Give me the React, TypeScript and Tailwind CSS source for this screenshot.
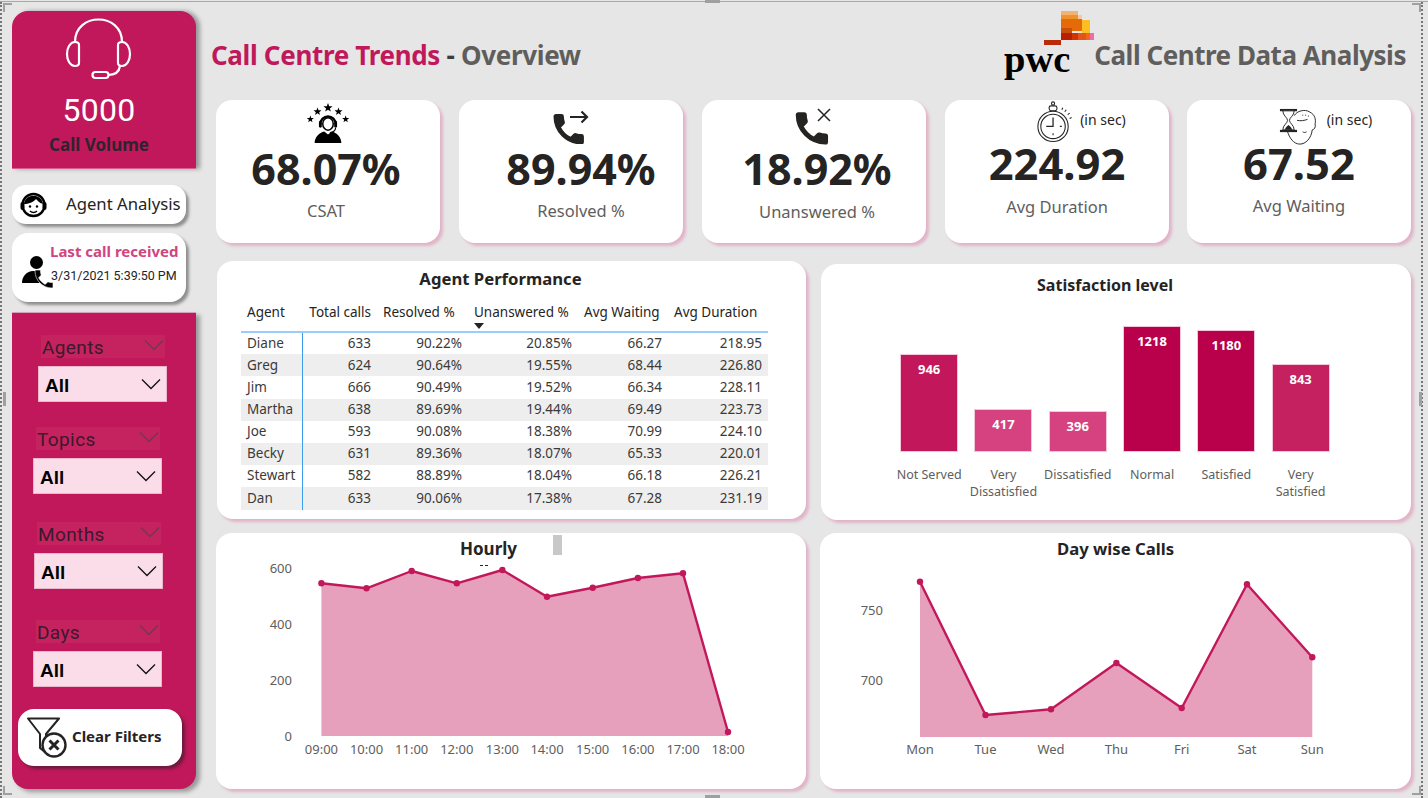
import React from "react";

const SEGOE = "font-['Noto_Sans',sans-serif]";

const agents = [
  ["Diane", "633", "90.22%", "20.85%", "66.27", "218.95"],
  ["Greg", "624", "90.64%", "19.55%", "68.44", "226.80"],
  ["Jim", "666", "90.49%", "19.52%", "66.34", "228.11"],
  ["Martha", "638", "89.69%", "19.44%", "69.49", "223.73"],
  ["Joe", "593", "90.08%", "18.38%", "70.99", "224.10"],
  ["Becky", "631", "89.36%", "18.07%", "65.33", "220.01"],
  ["Stewart", "582", "88.89%", "18.04%", "66.18", "226.21"],
  ["Dan", "633", "90.06%", "17.38%", "67.28", "231.19"],
];

const satisfaction = [
  { label: ["Not Served"], value: 946, h: 98, color: "bg-[#c2185b]" },
  { label: ["Very", "Dissatisfied"], value: 417, h: 43, color: "bg-[#d5427f]" },
  { label: ["Dissatisfied"], value: 396, h: 41, color: "bg-[#d5427f]" },
  { label: ["Normal"], value: 1218, h: 126, color: "bg-[#b9004b]" },
  { label: ["Satisfied"], value: 1180, h: 122, color: "bg-[#b9004b]" },
  { label: ["Very", "Satisfied"], value: 843, h: 88, color: "bg-[#c52060]" },
];

const slicers = [
  { name: "Agents", wrap: "ml-[29px] mt-[22px]" },
  { name: "Topics", wrap: "ml-[24px] mt-[25px]" },
  { name: "Months", wrap: "ml-[25px] mt-[28px]" },
  { name: "Days", wrap: "ml-[24px] mt-[31px]" },
];

const hourly = [
  ["09:00", 321.4, 583.3],
  ["10:00", 366.5, 588.3],
  ["11:00", 411.7, 571],
  ["12:00", 456.8, 583.3],
  ["13:00", 502.4, 570],
  ["14:00", 547, 596.7],
  ["15:00", 592.7, 587.7],
  ["16:00", 637.9, 578],
  ["17:00", 683, 573.3],
  ["18:00", 728, 732],
] as [string, number, number][];

const daily = [
  ["Mon", 920, 581.7],
  ["Tue", 985.5, 715],
  ["Wed", 1051, 709.3],
  ["Thu", 1116.4, 663],
  ["Fri", 1181.7, 708],
  ["Sat", 1247, 584.3],
  ["Sun", 1312.3, 657.3],
] as [string, number, number][];

const PHONE =
  "M6.62 10.79c1.44 2.83 3.76 5.14 6.59 6.59l2.2-2.2c.27-.27.67-.36 1.02-.24 1.12.37 2.33.57 3.57.57.55 0 1 .45 1 1V20c0 .55-.45 1-1 1-9.39 0-17-7.61-17-17 0-.55.45-1 1-1h3.5c.55 0 1 .45 1 1 0 1.25.2 2.45.57 3.57.11.35.03.74-.25 1.02l-2.2 2.2z";

function Star({ x, y, r }: { x: number; y: number; r: number }) {
  const pts = Array.from({ length: 10 }, (_, i) => {
    const a = -Math.PI / 2 + (i * Math.PI) / 5;
    const d = i % 2 ? r * 0.42 : r;
    return `${x + d * Math.cos(a)},${y + d * Math.sin(a)}`;
  }).join(" ");
  return <polygon points={pts} fill="#000" />;
}

function CsatIcon() {
  return (
    <svg width="42" height="41" viewBox="0 0 44 43">
      <Star x={22} y={5} r={5} />
      <Star x={11} y={9} r={4.4} />
      <Star x={33} y={9} r={4.4} />
      <Star x={3.5} y={17} r={3.8} />
      <Star x={40.5} y={17} r={3.8} />
      <path d="M14 22a8 8 0 0 1 16 0" fill="none" stroke="#000" strokeWidth="2.4" />
      <ellipse cx="22" cy="22" rx="5.5" ry="6.5" fill="#fff" stroke="#000" strokeWidth="1.6" />
      <rect x="12.5" y="19" width="3" height="7" rx="1.5" fill="#000" />
      <rect x="28.5" y="19" width="3" height="7" rx="1.5" fill="#000" />
      <path d="M8 42c0-6 5-11 10-12l4 3 4-3c5 1 10 6 10 12z" fill="#000" />
      <path d="M30 26c0 3-3 5-6 5" fill="none" stroke="#000" strokeWidth="1.2" />
    </svg>
  );
}

function PhoneArrow() {
  return (
    <svg width="38" height="36" viewBox="0 0 38 36">
      <g transform="translate(-2.5 2) scale(1.6)">
        <path d={PHONE} fill="#252423" stroke="#252423" strokeWidth="1" strokeLinejoin="round" />
      </g>
      <path d="M18 9h17M29.5 3.5L35 9l-5.5 5.5" fill="none" stroke="#252423" strokeWidth="2.2" />
    </svg>
  );
}

function PhoneCross() {
  return (
    <svg width="38" height="38" viewBox="0 0 38 38">
      <g transform="translate(-3.5 0) scale(1.7)">
        <path d={PHONE} fill="#252423" stroke="#252423" strokeWidth="1" strokeLinejoin="round" />
      </g>
      <path d="M23 1l12 12M35 1L23 13" fill="none" stroke="#252423" strokeWidth="1.5" />
    </svg>
  );
}

function Stopwatch() {
  return (
    <svg width="36" height="43" viewBox="0 0 36 44" fill="none" stroke="#252423">
      <circle cx="16" cy="27" r="15.5" strokeWidth="1.1" />
      <circle cx="16" cy="27" r="12.5" strokeWidth="1.1" />
      <path d="M16 18v9h-7" strokeWidth="1.3" />
      <path d="M16 36v-2M25 27h-2" strokeWidth="1.1" />
      <rect x="12" y="6" width="8" height="5" rx="2" strokeWidth="1.1" />
      <circle cx="16" cy="3.5" r="1.6" strokeWidth="1.1" />
      <path d="M25 10l1-2M28 12l1.5-2M31 15l2-1.5M33 19l2-1" strokeWidth="1.1" />
    </svg>
  );
}

function HourglassHead() {
  return (
    <svg width="40" height="38" viewBox="0 0 40 40" fill="none" stroke="#252423">
      <path d="M16 8c3-5 11-7 16-4 6 3 7 8 6 13 1 3-1 6-3 6-1 9-7 15-13 15-7 0-11-7-13-13" strokeWidth="1" fill="#fff" />
      <path d="M19 13c4 1 8 0 11-1M25 7v1M28 7v1M31 8v1" strokeWidth="1" />
      <path d="M25 25c1 1 3 1 4 0" strokeWidth="1" />
      <rect x="1" y="1" width="18" height="2.4" fill="#252423" stroke="none" />
      <rect x="1" y="23" width="18" height="2.4" fill="#252423" stroke="none" />
      <path d="M4 3c0 5 5 7 5 10s-5 5-5 10h12c0-5-5-7-5-10s5-5 5-10z" strokeWidth="1" fill="#fff" />
      <path d="M6 23c1-3 3-4 4-5 1 1 3 2 4 5z" fill="#252423" stroke="none" />
    </svg>
  );
}

function PwcLogo() {
  return (
    <svg width="100" height="76" viewBox="1000 8 100 76">
      <rect x="1061" y="11" width="17" height="4" fill="#f5b26e" />
      <rect x="1061" y="15" width="17" height="4" fill="#ee9230" />
      <rect x="1078" y="15" width="4" height="4" fill="#f8c9a0" />
      <rect x="1061" y="19" width="21" height="12" fill="#e56a08" />
      <rect x="1082" y="20" width="8" height="13" fill="#fbbf24" />
      <rect x="1061" y="28" width="11" height="5" fill="#c9500c" />
      <rect x="1061" y="33" width="11" height="7" fill="#b71f00" />
      <rect x="1072" y="33" width="6" height="7" fill="#d23400" />
      <rect x="1078" y="33" width="8" height="7" fill="#e4531a" />
      <rect x="1086" y="33" width="4" height="7" fill="#e96a1c" />
      <rect x="1090" y="33" width="4" height="7" fill="#f06ca8" />
      <rect x="1044" y="40" width="17" height="5" fill="#b92b08" />
      <text x="1004" y="72" fontFamily="'Liberation Serif',serif" fontWeight="700" fontSize="38.5" fill="#000">
        pwc
      </text>
    </svg>
  );
}

function Chevron({ className }: { className: string }) {
  return (
    <svg className={className} width="20" height="12" viewBox="0 0 20 12" fill="none" stroke="currentColor" strokeWidth="1.3">
      <path d="M1 1.5l9 9 9-9" />
    </svg>
  );
}

function Slicer({ name, wrap }: { name: string; wrap: string }) {
  return (
    <div className={wrap}>
      <div className="flex h-[23px] w-[124px] items-center justify-between bg-[#c5235f] pl-[1px] pr-[1px]">
        <span className="mt-[2px] font-['Roboto',sans-serif] text-[19px] leading-none tracking-[0.4px] text-[#3a1a2c]">{name}</span>
        <Chevron className="mb-[4px] text-[#6d3a50]" />
      </div>
      <div className="-ml-[3px] mt-[8px] flex h-[36px] w-[129px] items-center justify-between border border-[#e9b6cb] bg-[#fbdde9] pl-[6px] pr-[5px]">
        <span className="mt-[3px] font-['Liberation_Sans',sans-serif] text-[19px] font-bold leading-none text-black">All</span>
        <Chevron className="text-[#111]" />
      </div>
    </div>
  );
}

function Kpi({
  icon,
  value,
  label,
  big,
  shift,
  labelClass,
  note,
  iconRow,
}: {
  icon: React.ReactNode;
  value: string;
  label: string;
  big: boolean;
  shift: string;
  labelClass: string;
  note?: string;
  iconRow: string;
}) {
  return (
    <div className="flex h-[143px] w-[224px] flex-col items-center rounded-[16px] bg-white shadow-[3px_3px_3px_#e1b4c8]">
      <div className={`flex items-start ${iconRow}`}>
        {icon}
        {note && <span className={`${note} whitespace-nowrap text-[14px] leading-[18px] text-[#252423]`}>(in sec)</span>}
      </div>
      <div className={`${shift} text-center font-bold leading-none text-[#252423] ${big ? "text-[43px]" : "text-[43.5px]"}`}>{value}</div>
      <div className={`${shift} ${labelClass} text-[16.5px] leading-none text-[#605e5c]`}>{label}</div>
    </div>
  );
}

function AreaChart({
  points,
  viewBox,
  base,
  ticks,
  tickX,
  width,
  height,
}: {
  points: [string, number, number][];
  viewBox: string;
  base: number;
  ticks: [string, number][];
  tickX: number;
  width: number;
  height: number;
}) {
  const line = points.map((p) => `${p[1]},${p[2]}`).join(" ");
  const first = points[0][1];
  const last = points[points.length - 1][1];
  return (
    <svg width={width} height={height} viewBox={viewBox} className="block">
      <polygon points={`${first},${base} ${line} ${last},${base}`} fill="#e6a0bb" />
      <polyline points={line} fill="none" stroke="#c2185b" strokeWidth="2.4" strokeLinejoin="round" />
      {points.map((p) => (
        <circle key={p[0]} cx={p[1]} cy={p[2]} r="3.2" fill="#c2185b" />
      ))}
      {ticks.map(([t, y]) => (
        <text key={t} x={tickX} y={y + 4.5} textAnchor="end" fontSize="13" fill="#605e5c">
          {t}
        </text>
      ))}
      {points.map((p) => (
        <text key={p[0]} x={p[1]} y={754} textAnchor="middle" fontSize="13" fill="#605e5c">
          {p[0]}
        </text>
      ))}
    </svg>
  );
}

export default function App() {
  return (
    <div className={`relative flex h-[798px] w-[1428px] overflow-hidden bg-[#e6e6e6] pl-[12px] pt-[11px] ${SEGOE}`}>
      {/* left rail */}
      <aside className="flex h-[778px] w-[184px] flex-col">
        <div className="flex h-[158px] flex-col items-center rounded-t-[16px] border-b border-[#d6608f] bg-[#c0185a] pr-[10px] shadow-[4px_0_4px_#9a9a9a]">
          <svg className="mt-[7px] block" width="70" height="64" viewBox="64 18 70 64" fill="none" stroke="#fff" strokeWidth="2.2">
            <path d="M75 42C75 12 122 12 122 42" />
            <path d="M75 42c-5 0-8 6-8 12s3 12 8 12c3 0 4-1 4-3V45c0-2-1-3-4-3z" />
            <path d="M122 42c5 0 8 6 8 12s-3 12-8 12c-3 0-4-1-4-3V45c0-2 1-3 4-3z" />
            <path d="M120 66c-1 7-6 9-12 9" />
            <rect x="92.5" y="72" width="16" height="6" rx="3" />
          </svg>
          <div className="mt-[12px] font-['Roboto',sans-serif] text-[32px] leading-none tracking-[0.3px] text-white">5000</div>
          <div className="mt-[7px] text-[17px] font-bold leading-[24px] text-[#2d2430]">Call Volume</div>
        </div>

        <div className="mt-[16px] flex h-[39px] w-[174px] items-center rounded-[14px] bg-white pl-[8px] shadow-[3px_3px_3px_#8f8f8f]">
          <svg width="27" height="27" viewBox="0 0 27 27">
            <circle cx="13.5" cy="14" r="11" fill="none" stroke="#000" strokeWidth="2.4" />
            <path d="M4 13c1-11 18-11 19 0-4-1-6-4-7-5-2 3-8 5-12 5z" fill="#000" />
            <rect x="0.5" y="11" width="4" height="8" rx="2" fill="#000" />
            <rect x="22.5" y="11" width="4" height="8" rx="2" fill="#000" />
            <circle cx="10" cy="15.5" r="1.2" fill="#000" />
            <circle cx="17" cy="15.5" r="1.2" fill="#000" />
            <path d="M10 20c2 2 5 2 7 0" fill="none" stroke="#000" strokeWidth="1.4" />
          </svg>
          <span className="ml-[19px] whitespace-nowrap text-[16.7px] leading-none text-[#252423]">Agent Analysis</span>
        </div>

        <div className="mt-[9px] flex h-[69px] w-[174px] rounded-[16px] bg-white shadow-[3px_3px_3px_#8f8f8f]">
          <svg className="ml-[10px] mt-[23px]" width="33" height="34" viewBox="0 0 33 34">
            <circle cx="14.5" cy="6.5" r="6.5" fill="#000" />
            <path d="M0 27c0-7 5-12 11-12h7l-3 4c0 3 1 5 3 8z" fill="#000" />
            <g transform="translate(10 11) scale(1)">
              <path d={PHONE} fill="#000" stroke="#fff" strokeWidth="0.6" />
            </g>
          </svg>
          <div className="-ml-[5px] mt-[9px]">
            <div className="whitespace-nowrap text-[15px] font-bold leading-[18px] text-[#d0457f]">Last call received</div>
            <div className="ml-[1px] mt-[8px] whitespace-nowrap font-['Roboto',sans-serif] text-[12.5px] leading-[16px] text-[#252423]">3/31/2021 5:39:50 PM</div>
          </div>
        </div>

        <div className="mt-[10px] h-[477px] rounded-b-[16px] border-t border-[#d9a0ba] bg-[#c0185a] shadow-[4px_3px_4px_#9a9a9a]">
          {slicers.map((s) => (
            <Slicer key={s.name} name={s.name} wrap={s.wrap} />
          ))}
          <div className="ml-[6px] mt-[22px] flex h-[57px] w-[164px] items-center rounded-[16px] bg-white pl-[8px] shadow-[3px_3px_3px_#6e1a3e]">
            <svg width="41" height="41" viewBox="0 0 41 41">
              <path d="M2 1.5h31L20 17v19l-6-5V17z" fill="none" stroke="#252423" strokeWidth="2" strokeLinejoin="round" />
              <circle cx="28" cy="28" r="11.5" fill="#fff" stroke="#252423" strokeWidth="2.4" />
              <path d="M23.5 23.5l9 9M32.5 23.5l-9 9" stroke="#252423" strokeWidth="3" />
            </svg>
            <span className="mb-[3px] ml-[5px] whitespace-nowrap text-[15px] font-bold leading-none text-[#252423]">Clear Filters</span>
          </div>
        </div>
      </aside>

      {/* report area */}
      <main className="ml-[20px] w-[1196px]">
        <header className="flex h-[89px] items-start">
          <h1 className="-ml-[5px] mt-[26px] whitespace-nowrap text-[26px] font-bold leading-[36px] tracking-[-0.33px]">
            <span className="text-[#c0185a]">Call Centre Trends</span>
            <span className="text-[#3c3c3c]"> - </span>
            <span className="text-[#605e5c]">Overview</span>
          </h1>
          <div className="ml-auto flex items-start">
            <div className="-mt-[3px]">
              <PwcLogo />
            </div>
            <div className="-ml-[6px] mr-[6px] mt-[26px] whitespace-nowrap text-[26px] font-bold leading-[36px] tracking-[-0.47px] text-[#605e5c]">Call Centre Data Analysis</div>
          </div>
        </header>

        <div className="flex gap-[19px]">
          <Kpi icon={<CsatIcon />} value="68.07%" label="CSAT" big shift="-ml-[4px]" labelClass="mt-[13px]" iconRow="mt-[3px] h-[44px]" />
          <Kpi icon={<PhoneArrow />} value="89.94%" label="Resolved %" big shift="ml-[20px]" labelClass="mt-[13px]" iconRow="mt-[8px] h-[39px]" />
          <Kpi icon={<PhoneCross />} value="18.92%" label="Unanswered %" big shift="ml-[6px]" labelClass="mt-[14px]" iconRow="mt-[8px] h-[39px]" />
          <Kpi icon={<Stopwatch />} value="224.92" label="Avg Duration" big={false} shift="ml-[0px]" labelClass="mt-[13px]" note="ml-[7px] mt-[11px]" iconRow="ml-[49px] mt-[0px] h-[42px]" />
          <div className="-ml-[1px]">
            <Kpi icon={<HourglassHead />} value="67.52" label="Avg Waiting" big={false} shift="ml-[0px]" labelClass="mt-[12px]" note="ml-[9px] mt-[3px]" iconRow="ml-[52px] mt-[8px] h-[34px]" />
          </div>
        </div>

        <div className="mt-[18px] flex items-start">
          <section className="ml-[1px] h-[258px] w-[589px] rounded-[16px] bg-white pl-[24px] shadow-[3px_3px_3px_#e1b4c8]">
            <h2 className="pr-[46px] pt-[7px] text-center text-[16.7px] font-bold leading-[22px] text-[#252423]">Agent Performance</h2>
            <table className="mt-[10px] w-[527px] table-fixed border-collapse text-[13.5px] leading-none text-[#3b3a39]">
              <colgroup>
                <col className="w-[61px]" />
                <col className="w-[75px]" />
                <col className="w-[91px]" />
                <col className="w-[110px]" />
                <col className="w-[90px]" />
                <col className="w-[100px]" />
              </colgroup>
              <thead>
                <tr className="h-[32px] border-b-2 border-[#99ccff] text-[#252423]">
                  <th className="pb-[5px] pl-[6px] text-left font-normal">Agent</th>
                  <th className="whitespace-nowrap pb-[5px] pr-[6px] text-right font-normal">Total calls</th>
                  <th className="whitespace-nowrap pb-[5px] pl-[6px] text-left font-normal">Resolved %</th>
                  <th className="relative whitespace-nowrap pb-[5px] pl-[6px] text-left font-normal">
                    Unanswered %
                    <span className="absolute bottom-[2px] left-[6px] h-0 w-0 border-x-[5px] border-t-[6px] border-x-transparent border-t-[#252423]" />
                  </th>
                  <th className="whitespace-nowrap pb-[5px] pl-[6px] text-left font-normal">Avg Waiting</th>
                  <th className="whitespace-nowrap pb-[5px] pl-[6px] text-left font-normal">Avg Duration</th>
                </tr>
              </thead>
              <tbody>
                {agents.map((row, i) => (
                  <tr key={row[0]} className={`h-[22.2px] ${i % 2 ? "bg-[#eeeeee]" : "bg-white"}`}>
                    <td className="border-r border-[#3b9cf0] pl-[6px]">{row[0]}</td>
                    {row.slice(1).map((v, j) => (
                      <td key={j} className="pr-[6px] text-right">
                        {v}
                      </td>
                    ))}
                  </tr>
                ))}
              </tbody>
            </table>
          </section>

          <section className="ml-[15px] mt-[3px] h-[256px] w-[590px] rounded-[16px] bg-white shadow-[3px_3px_3px_#e1b4c8]">
            <h2 className="pr-[22px] pt-[10px] text-center text-[16px] font-bold leading-[22px] text-[#252423]">Satisfaction level</h2>
            <div className="ml-[71px] mt-[30px] flex h-[126px] items-end">
              {satisfaction.map((b) => (
                <div key={b.value} className="flex w-[74.3px] justify-center">
                  <div className={`w-[58px] border border-[#f3c6da] pt-[5px] text-center text-[13px] font-bold leading-[18px] text-white ${b.color}`} style={{ height: b.h }}>
                    {b.value}
                  </div>
                </div>
              ))}
            </div>
            <div className="ml-[71px] mt-[14px] flex">
              {satisfaction.map((b) => (
                <div key={b.value} className="w-[74.3px] text-center text-[12.5px] leading-[17px] text-[#605e5c]">
                  {b.label.map((l) => (
                    <div key={l}>{l}</div>
                  ))}
                </div>
              ))}
            </div>
          </section>
        </div>

        <div className="mt-[13px] flex items-start">
          <section className="relative h-[256px] w-[590px] rounded-[16px] bg-white shadow-[3px_3px_3px_#e1b4c8]">
            <h2 className="h-[27px] pr-[45px] pt-[5px] text-center text-[17px] font-bold leading-[22px] text-[#252423]">Hourly</h2>
            <AreaChart
              points={hourly}
              viewBox="216 560 590 200"
              base={736}
              ticks={[["600", 568.3], ["400", 624.7], ["200", 680.7], ["0", 736.3]]}
              tickX={292}
              width={590}
              height={200}
            />
            <span className="absolute left-[337px] top-[2px] h-[20px] w-[9px] bg-[#c8c8c8]" />
            <span className="absolute left-[264px] top-[32px] h-[1px] w-[8px] border-t border-dashed border-[#252423]" />
          </section>
          <section className="ml-[14px] h-[256px] w-[591px] rounded-[16px] bg-white shadow-[3px_3px_3px_#e1b4c8]">
            <h2 className="h-[27px] pt-[5px] text-center text-[16.7px] font-bold leading-[22px] text-[#252423]">Day wise Calls</h2>
            <AreaChart
              points={daily}
              viewBox="820 560 591 200"
              base={737}
              ticks={[["750", 610.7], ["700", 680.3]]}
              tickX={883}
              width={591}
              height={200}
            />
          </section>
        </div>
      </main>

      {/* editor frame marks */}
      <span className="absolute left-0 right-0 top-[1px] h-[1px] bg-[#a8a8a8]" />
      <span className="absolute bottom-0 left-0 top-[2px] w-[2px] border-l-2 border-dotted border-[#777]" />
      <span className="absolute bottom-0 right-[5px] top-[2px] w-[2px] border-l-2 border-dotted border-[#777]" />
      <span className="absolute left-[3px] top-[3px] h-[9px] w-[9px] border-l-2 border-t-2 border-[#a0a0a0]" />
      <span className="absolute right-[7px] top-[3px] h-[9px] w-[9px] border-r-2 border-t-2 border-[#a0a0a0]" />
      <span className="absolute bottom-[3px] left-[3px] h-[9px] w-[9px] border-b-2 border-l-2 border-[#a0a0a0]" />
      <span className="absolute bottom-[3px] right-[7px] h-[9px] w-[9px] border-b-2 border-r-2 border-[#a0a0a0]" />
      <span className="absolute left-[705px] top-0 h-[3px] w-[15px] bg-[#a0a0a0]" />
      <span className="absolute bottom-0 left-[705px] h-[3px] w-[15px] bg-[#a0a0a0]" />
      <span className="absolute left-[3px] top-[392px] h-[14px] w-[3px] bg-[#a0a0a0]" />
      <span className="absolute right-[6px] top-[392px] h-[14px] w-[3px] bg-[#a0a0a0]" />
    </div>
  );
}
